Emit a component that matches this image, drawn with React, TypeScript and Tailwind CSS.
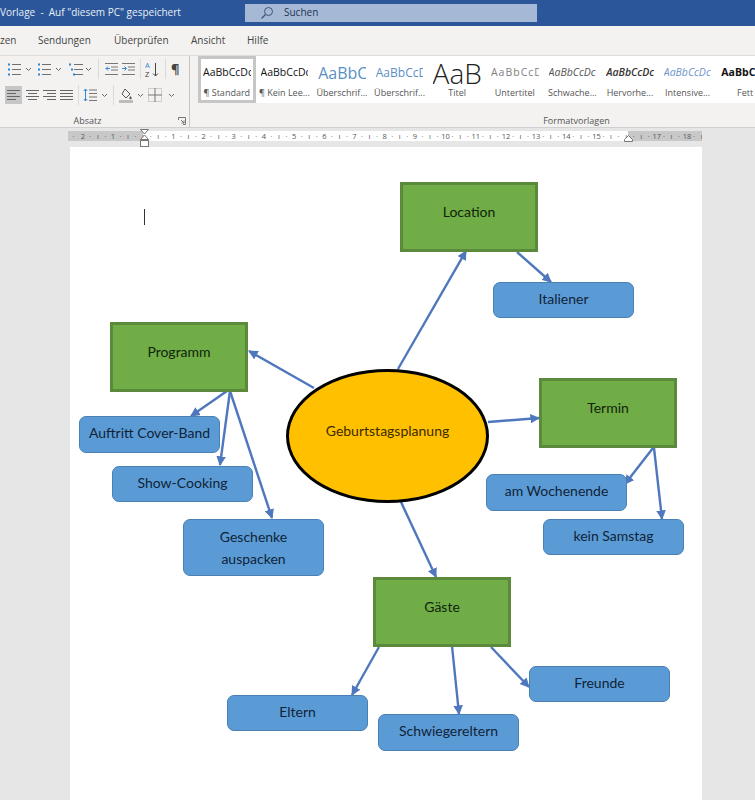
const ui = { fontFamily: '"Open Sans", "Noto Sans", sans-serif' };
const shape = { fontFamily: 'Lato, "Noto Sans", sans-serif' };

function Chevron() {
  return (
    <svg width="7" height="5" viewBox="0 0 7 5" className="shrink-0">
      <path d="M1 1l2.5 2.5L6 1" fill="none" stroke="#666" strokeWidth="1" />
    </svg>
  );
}

function Sep() {
  return <div className="w-px h-[20px] bg-[#dcdbda] shrink-0" />;
}

function ListIcon({ kind }: { kind: 'bullet' | 'number' | 'multi' }) {
  const x = kind === 'multi' ? 6 : 5;
  return (
    <svg width="15" height="15" viewBox="0 0 15 15" className="shrink-0">
      <path d={`M${x} 2.5h9M${x} 7.5h9M${x} 12.5h9`} stroke="#6f6f6f" strokeWidth="1" />
      <rect x="1" y="1.5" width="2" height="2" fill="#2b88d8" />
      <rect x={kind === 'multi' ? 3 : 1} y="6.5" width="2" height="2" fill="#2b88d8" />
      <rect x={kind === 'multi' ? 5 : 1} y="11.5" width="2" height="2" fill="#2b88d8" />
    </svg>
  );
}

function IndentIcon({ flip }: { flip?: boolean }) {
  return (
    <svg width="13" height="14" viewBox="0 0 13 14" className="shrink-0">
      <path d="M0 1.5h13M6 5h7M6 8h7M0 12.5h13" stroke="#777" strokeWidth="1" />
      <path d={flip ? 'M0 6.5h4M2.5 4.5l2 2-2 2' : 'M5 6.5H1M3 4.5l-2 2 2 2'} fill="none" stroke="#2b88d8" strokeWidth="1" />
    </svg>
  );
}

function AlignIcon({ d }: { d: string }) {
  return (
    <svg width="13" height="13" viewBox="0 0 13 13" className="shrink-0">
      <path d={d} stroke="#666" strokeWidth="1" />
    </svg>
  );
}

const styles = [
  { sample: 'AaBbCcDc', label: '¶ Standard', cls: 'text-[10.5px] text-[#111]', active: true },
  { sample: 'AaBbCcDc', label: '¶ Kein Lee...', cls: 'text-[10.5px] text-[#111]' },
  { sample: 'AaBbCc', label: 'Überschrif...', cls: 'text-[16px] text-[#5b8fc4]' },
  { sample: 'AaBbCcD', label: 'Überschrif...', cls: 'text-[12px] text-[#5b8fc4]' },
  { sample: 'AaB', label: 'Titel', cls: 'text-[28px] font-light text-[#222] justify-center' },
  { sample: 'AaBbCcD', label: 'Untertitel', cls: 'text-[10.5px] tracking-[1px] text-[#808080]' },
  { sample: 'AaBbCcDc', label: 'Schwache...', cls: 'text-[10.5px] italic text-[#555]' },
  { sample: 'AaBbCcDc', label: 'Hervorhe...', cls: 'text-[10.5px] italic font-semibold text-[#333]' },
  { sample: 'AaBbCcDc', label: 'Intensive...', cls: 'text-[10.5px] italic text-[#6f93cb]' },
  { sample: 'AaBbCc', label: 'Fett', cls: 'text-[10.5px] font-bold text-[#111]' },
];

const rulerLabels = ['2', '1', '', '1', '2', '3', '4', '5', '6', '7', '8', '9', '10', '11', '12', '13', '14', '15', '', '17', '18'];

function Ruler() {
  return (
    <div className="relative h-[10px] w-[634px] ml-[68px] flex bg-white text-[7.5px] leading-[10px] text-[#555] overflow-hidden">
      <div className="absolute left-0 top-0 h-full w-[75px] bg-[#c8c8c8]" />
      <div className="absolute right-0 top-0 h-full w-[74px] bg-[#c8c8c8]" />
      <div className="relative w-[11px] shrink-0 text-center">·</div>
      {rulerLabels.map((n, i) => (
        <div key={i} className="relative w-[30.2px] shrink-0 grid grid-cols-4 text-center">
          <span>{n || 'ı'}</span>
          <span>·</span>
          <span>ı</span>
          <span>·</span>
        </div>
      ))}
    </div>
  );
}

const arrows = [
  [328, 222, 396, 104],
  [447, 105, 481, 135],
  [244, 241, 179, 204],
  [157, 244, 121, 269],
  [160, 244, 150, 318],
  [160, 244, 202, 371],
  [418, 275, 469, 271],
  [583, 301, 555, 337],
  [584, 301, 592, 372],
  [331, 355, 366, 430],
  [309, 500, 282, 548],
  [382, 499, 389, 567],
  [421, 500, 459, 540],
];

function Arrows() {
  return (
    <svg className="absolute left-0 top-0" width="632" height="653" viewBox="0 0 632 653">
      <defs>
        <marker id="head" markerWidth="4" markerHeight="4" refX="3.6" refY="2" orient="auto">
          <path d="M0 0L4 2L0 4z" fill="#4f77bd" />
        </marker>
      </defs>
      {arrows.map((a, i) => (
        <line key={i} x1={a[0]} y1={a[1]} x2={a[2]} y2={a[3]} stroke="#4f77bd" strokeWidth="2.4" markerEnd="url(#head)" />
      ))}
    </svg>
  );
}

const green = 'absolute w-[138px] h-[70px] bg-[#70ad47] border-[3px] border-[#5b8a3c] flex items-center justify-center pb-[11px] text-[14px] text-[#10240a]';
const blue = 'absolute w-[141px] bg-[#5b9bd5] border border-[#4a80b3] rounded-[7px] flex items-center justify-center text-center text-[14px] leading-[22px] text-[#0f2338]';

export default function App() {
  return (
    <div className="w-[755px] h-[800px] overflow-hidden bg-[#e6e6e6] flex flex-col" style={ui}>
      {/* title bar */}
      <div className="h-[26px] bg-[#2b579a] flex items-center shrink-0 text-white text-[10px]">
        <div className="w-[245px] shrink-0 whitespace-nowrap overflow-hidden pb-[2px] text-[#e8eef7]">Vorlage&nbsp; -&nbsp; Auf "diesem PC" gespeichert</div>
        <div className="w-[292px] h-[18px] bg-[#a5b9d6] flex items-center pl-[15px] gap-[10px] text-[#1f3553] mb-[1px]">
          <svg width="14" height="14" viewBox="0 0 14 14">
            <circle cx="8.5" cy="5.5" r="4" fill="none" stroke="#3d5578" strokeWidth="1" />
            <path d="M5.5 8.5L1.5 12.5" stroke="#3d5578" strokeWidth="1.2" />
          </svg>
          <span>Suchen</span>
        </div>
      </div>

      {/* tabs */}
      <div className="h-[29px] bg-[#f3f2f1] flex items-center shrink-0 text-[10px] text-[#444] whitespace-nowrap">
        <span className="w-[38px] shrink-0 overflow-hidden">zen</span>
        <span className="w-[76px] shrink-0">Sendungen</span>
        <span className="w-[77px] shrink-0">Überprüfen</span>
        <span className="w-[56px] shrink-0">Ansicht</span>
        <span>Hilfe</span>
      </div>

      {/* ribbon */}
      <div className="h-[72px] bg-[#f3f2f1] border-t border-[#dedddc] flex shrink-0">
        <div className="w-[190px] shrink-0 border-r border-[#c8c6c4] flex flex-col">
          <div className="flex items-center h-[18px] mt-[4px] pl-[7px]">
            <ListIcon kind="bullet" />
            <div className="ml-[3px] mr-[5px]"><Chevron /></div>
            <ListIcon kind="number" />
            <div className="ml-[3px] mr-[6px]"><Chevron /></div>
            <ListIcon kind="multi" />
            <div className="ml-[2px] mr-[6px]"><Chevron /></div>
            <Sep />
            <div className="ml-[6px] mr-[4px]"><IndentIcon /></div>
            <IndentIcon flip />
            <div className="ml-[5px] mr-[4px]"><Sep /></div>
            <svg width="15" height="17" viewBox="0 0 15 17" className="shrink-0">
              <text x="0" y="7" fontSize="7.5" fill="#2b88d8" fontFamily="Open Sans">A</text>
              <text x="0" y="15.5" fontSize="7.5" fill="#444" fontFamily="Open Sans">Z</text>
              <path d="M10.5 2v13M8 12.5l2.5 2.5 2.5-2.5" fill="none" stroke="#444" strokeWidth="1" />
            </svg>
            <div className="ml-[5px] mr-[5px]"><Sep /></div>
            <span className="text-[13px] leading-none font-bold text-[#444]">¶</span>
          </div>
          <div className="flex items-center h-[18px] mt-[8px] pl-[5px]">
            <div className="w-[17px] h-[18px] bg-[#c6c6c6] flex items-center justify-center mr-[4px]">
              <AlignIcon d="M0 1.5h13M0 4.5h9M0 7.5h13M0 10.5h9" />
            </div>
            <div className="mr-[4px]"><AlignIcon d="M0 1.5h13M2 4.5h9M0 7.5h13M2 10.5h9" /></div>
            <div className="mr-[4px]"><AlignIcon d="M0 1.5h13M4 4.5h9M0 7.5h13M4 10.5h9" /></div>
            <div className="mr-[5px]"><AlignIcon d="M0 1.5h13M0 4.5h13M0 7.5h13M0 10.5h13" /></div>
            <Sep />
            <svg width="14" height="14" viewBox="0 0 14 14" className="ml-[4px] mr-[4px] shrink-0">
              <path d="M6 2h8M6 5.5h8M6 9h8M6 12.5h8" stroke="#777" strokeWidth="1" />
              <path d="M2.5 1v12M.8 3l1.7-2 1.7 2M.8 11l1.7 2 1.7-2" fill="none" stroke="#2b88d8" strokeWidth="1" />
            </svg>
            <Chevron />
            <div className="ml-[5px] mr-[5px]"><Sep /></div>
            <svg width="14" height="15" viewBox="0 0 14 15" className="shrink-0">
              <path d="M6 1l5 5-4 4-4-4z" fill="none" stroke="#555" strokeWidth="1" />
              <path d="M11.5 8c.8 1 1.2 1.6 1.2 2.1a1.2 1.2 0 01-2.4 0c0-.5.4-1.1 1.2-2.1z" fill="#555" />
              <rect x="0" y="12" width="14" height="3" fill="#bdbdbd" />
            </svg>
            <div className="ml-[4px] mr-[4px]"><Chevron /></div>
            <svg width="14" height="14" viewBox="0 0 14 14" className="shrink-0">
              <rect x=".5" y=".5" width="13" height="13" fill="none" stroke="#aaa" strokeDasharray="1 1" />
              <path d="M7 0v14M0 7h14" stroke="#777" strokeWidth="1" />
            </svg>
            <div className="ml-[6px]"><Chevron /></div>
          </div>
          <div className="relative flex-1 flex items-end justify-center text-[9px] leading-[13px] text-[#555] pr-[14px]">
            Absatz
            <svg width="8" height="8" viewBox="0 0 8 8" className="absolute right-[3px] bottom-[2px]">
              <path d="M.5 3V.5H7.5V7.5H5M3 3l3 3M6 3.5V6H3.5" fill="none" stroke="#777" strokeWidth="1" />
            </svg>
          </div>
        </div>
        <div className="w-[765px] shrink-0 flex flex-col pl-[8px]">
          <div className="h-[47px] bg-white flex shrink-0 overflow-hidden">
            {styles.map((s, i) => (
              <div key={i} className={`w-[57.6px] shrink-0 flex flex-col items-center overflow-hidden ${s.active ? 'border-[3px] border-[#c6c6c6]' : 'border-[3px] border-white'}`}>
                <div className={`h-[27px] self-stretch mx-[2px] flex items-center overflow-hidden whitespace-nowrap ${s.cls}`}>{s.sample}</div>
                <div className="text-[9px] leading-[14px] whitespace-nowrap text-[#555]">{s.label}</div>
              </div>
            ))}
          </div>
          <div className="flex-1 flex items-end justify-center text-[9px] leading-[13px] text-[#555]">Formatvorlagen</div>
        </div>
      </div>

      {/* ruler band */}
      <div className="h-[20px] shrink-0 pt-[3px] border-t border-[#d0d0d0] relative">
        <Ruler />
        <svg width="9" height="18" viewBox="0 0 9 18" className="absolute left-[140px] top-[1px]">
          <path d="M.5.5h8L4.5 5zM4.5 6l4 4.5H.5z" fill="#fff" stroke="#777" />
          <rect x=".5" y="11.5" width="8" height="6" fill="#fff" stroke="#777" />
        </svg>
        <svg width="9" height="7" viewBox="0 0 9 7" className="absolute left-[624px] top-[7px]">
          <path d="M4.5.5l4 4v2h-8v-2z" fill="#fff" stroke="#777" />
        </svg>
      </div>

      {/* page */}
      <div className="ml-[70px] w-[632px] flex-1 bg-white relative" style={shape}>
        <div className="absolute left-[74px] top-[62px] w-px h-[16px] bg-[#333]" />
        <Arrows />

        <div className="absolute left-[216px] top-[222px] w-[203px] h-[134px] rounded-[50%] bg-[#ffc000] border-[3px] border-black flex items-center justify-center pb-[11px] text-[14px] text-[#3a2a00]">Geburtstagsplanung</div>

        <div className={`${green} left-[330px] top-[35px]`}>Location</div>
        <div className={`${green} left-[40px] top-[175px]`}>Programm</div>
        <div className={`${green} left-[469px] top-[231px]`}>Termin</div>
        <div className={`${green} left-[303px] top-[430px]`}>Gäste</div>

        <div className={`${blue} left-[423px] top-[135px] h-[36px] pb-[3px]`}>Italiener</div>
        <div className={`${blue} left-[9px] top-[269px] h-[37px] pb-[3px]`}>Auftritt Cover-Band</div>
        <div className={`${blue} left-[42px] top-[319px] h-[36px] pb-[3px]`}>Show-Cooking</div>
        <div className={`${blue} left-[113px] top-[372px] h-[57px]`}>Geschenke<br />auspacken</div>
        <div className={`${blue} left-[416px] top-[327px] h-[37px] pb-[3px]`}>am Wochenende</div>
        <div className={`${blue} left-[473px] top-[372px] h-[36px] pb-[3px]`}>kein Samstag</div>
        <div className={`${blue} left-[157px] top-[548px] h-[36px] pb-[3px]`}>Eltern</div>
        <div className={`${blue} left-[308px] top-[567px] h-[37px] pb-[3px]`}>Schwiegereltern</div>
        <div className={`${blue} left-[459px] top-[519px] h-[36px] pb-[3px]`}>Freunde</div>
      </div>
    </div>
  );
}
